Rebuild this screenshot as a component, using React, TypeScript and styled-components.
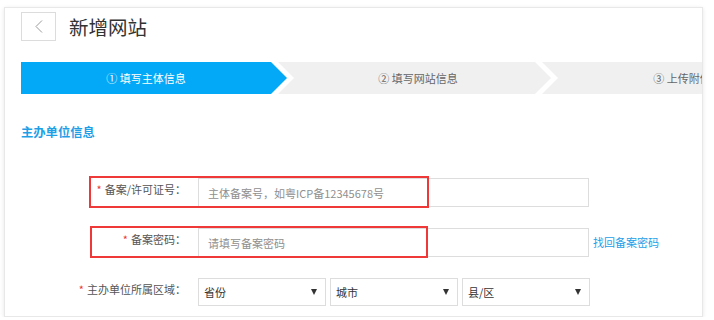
import styled, {createGlobalStyle} from 'styled-components'

const GlobalStyle = createGlobalStyle`
  body {
    margin: 0;
    background: #fff;
    font-family: "Noto Sans CJK SC", "Liberation Sans", sans-serif;
  }
`

const Card = styled.div`
  box-sizing: border-box;
  margin: 7px 0 0 4px;
  width: 699px;
  height: 310px;
  padding: 4px 0 0 16px;
  border: 1px solid #e8e8e8;
  box-shadow: 0 1px 4px rgba(0, 0, 0, 0.1);
  overflow: hidden;
  background: #fff;
`

const Header = styled.div`
  display: flex;
  align-items: center;
  gap: 13px;
`

const BackButton = styled.button`
  box-sizing: border-box;
  width: 35px;
  height: 29px;
  padding: 0;
  border: 1px solid #dcdcdc;
  background: #fff;
  display: flex;
  align-items: center;
  justify-content: center;
  cursor: pointer;
`

const Title = styled.h1`
  margin: 0;
  font-size: 19.5px;
  font-weight: normal;
  color: #333;
  line-height: 29px;
`

const StepBar = styled.div`
  margin-top: 21px;
  height: 32px;
  display: flex;
  background: #f0f0f0;
  overflow: hidden;
`

const Step = styled.div<{$active?: boolean; $first?: boolean; $width: number}>`
  position: relative;
  flex: 0 0 auto;
  box-sizing: border-box;
  width: ${p => p.$width}px;
  padding-left: ${p => (p.$first ? 0 : 30)}px;
  background: ${p => (p.$active ? '#03a9f7' : 'transparent')};
  color: ${p => (p.$active ? '#fff' : '#666')};
  font-size: 11px;
  line-height: 32px;
  text-align: center;
  white-space: nowrap;

  &::before {
    content: '';
    position: absolute;
    top: -7px;
    right: -23px;
    border-top: 23px solid transparent;
    border-bottom: 23px solid transparent;
    border-left: 23px solid #fff;
    z-index: 1;
  }

  &::after {
    content: '';
    position: absolute;
    top: 0;
    right: -16px;
    border-top: 16px solid transparent;
    border-bottom: 16px solid transparent;
    border-left: 16px solid ${p => (p.$active ? '#03a9f7' : '#f0f0f0')};
    z-index: 2;
  }
`

const SectionTitle = styled.h2`
  margin: 30px 0 0;
  font-size: 12.3px;
  line-height: 16px;
  font-weight: bold;
  color: #1f9fe6;
`

const Form = styled.div`
  margin-top: 38px;
  display: flex;
  flex-direction: column;
  gap: 21px;
`

const Row = styled.div`
  position: relative;
  display: flex;
  align-items: flex-start;
  height: 29px;
`

const Label = styled.label`
  width: 165px;
  flex: 0 0 auto;
  text-align: right;
  font-size: 11px;
  line-height: 22px;
  color: #555;
  white-space: nowrap;
`

const Star = styled.span`
  color: #e83a3a;
  margin-right: 3px;
`

const Input = styled.input`
  box-sizing: border-box;
  margin-left: 12px;
  width: 391px;
  height: 29px;
  padding: 0 0 0 9px;
  border: 1px solid #dddddd;
  font-family: inherit;
  font-size: 11px;
  color: #333;
  outline: none;

  &::placeholder {
    color: #8f8f8f;
  }
`

const Link = styled.a`
  margin-left: 4px;
  font-size: 11px;
  line-height: 29px;
  color: #1c9fe8;
  text-decoration: none;
  cursor: pointer;
`

const Selects = styled.div`
  margin-left: 12px;
  display: flex;
  gap: 4px;
`

const Select = styled.div`
  box-sizing: border-box;
  width: 128px;
  height: 28px;
  padding: 0 8px 0 5px;
  border: 1px solid #dddddd;
  display: flex;
  align-items: center;
  justify-content: space-between;
  font-size: 11px;
  color: #333;
`

const Caret = styled.span`
  width: 0;
  height: 0;
  border-left: 3px solid transparent;
  border-right: 3px solid transparent;
  border-top: 6px solid #333;
`

const Highlight = styled.div<{$left: number; $width: number}>`
  position: absolute;
  top: -2px;
  left: ${p => p.$left}px;
  width: ${p => p.$width}px;
  height: 32px;
  box-sizing: border-box;
  border: 2px solid #ef3838;
  pointer-events: none;
`

function App() {
  return (
    <>
      <GlobalStyle />
      <Card>
        <Header>
          <BackButton aria-label="返回">
            <svg width="8" height="13" viewBox="0 0 8 13">
              <polyline points="7,0.5 1,6.5 7,12.5" fill="none" stroke="#9a9a9a" strokeWidth="1" />
            </svg>
          </BackButton>
          <Title>新增网站</Title>
        </Header>

        <StepBar>
          <Step $active $first $width={250}>① 填写主体信息</Step>
          <Step $width={264}>② 填写网站信息</Step>
          <Step $width={264}>③ 上传附件</Step>
        </StepBar>

        <SectionTitle>主办单位信息</SectionTitle>

        <Form>
          <Row>
            <Label><Star>*</Star>备案/许可证号：</Label>
            <Input placeholder="主体备案号，如粤ICP备12345678号" />
            <Highlight $left={68} $width={340} />
          </Row>
          <Row>
            <Label><Star>*</Star>备案密码：</Label>
            <Input placeholder="请填写备案密码" />
            <Link>找回备案密码</Link>
            <Highlight $left={69} $width={338} />
          </Row>
          <Row>
            <Label><Star>*</Star>主办单位所属区域：</Label>
            <Selects>
              <Select>省份<Caret /></Select>
              <Select>城市<Caret /></Select>
              <Select>县/区<Caret /></Select>
            </Selects>
          </Row>
        </Form>
      </Card>
    </>
  )
}

export default App
